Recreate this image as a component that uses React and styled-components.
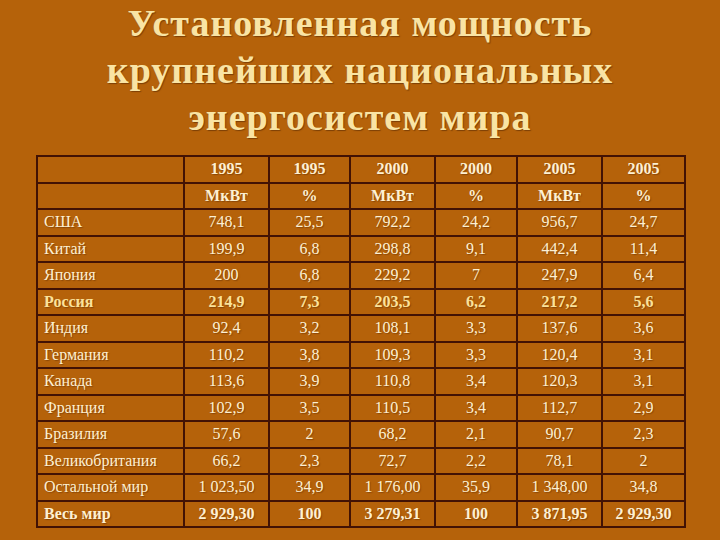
import React from "react";
import styled, { createGlobalStyle } from "styled-components";

const GlobalStyle = createGlobalStyle`
  html, body {
    margin: 0;
    padding: 0;
    background: #b5620a;
  }
`;

const cols = [147, 85, 81, 85, 82, 85, 83];

const header = [
  ["", "1995", "1995", "2000", "2000", "2005", "2005"],
  ["", "МкВт", "%", "МкВт", "%", "МкВт", "%"],
];

const rows = [
  { name: "США", values: ["748,1", "25,5", "792,2", "24,2", "956,7", "24,7"] },
  { name: "Китай", values: ["199,9", "6,8", "298,8", "9,1", "442,4", "11,4"] },
  { name: "Япония", values: ["200", "6,8", "229,2", "7", "247,9", "6,4"] },
  { name: "Россия", values: ["214,9", "7,3", "203,5", "6,2", "217,2", "5,6"], accent: true },
  { name: "Индия", values: ["92,4", "3,2", "108,1", "3,3", "137,6", "3,6"] },
  { name: "Германия", values: ["110,2", "3,8", "109,3", "3,3", "120,4", "3,1"] },
  { name: "Канада", values: ["113,6", "3,9", "110,8", "3,4", "120,3", "3,1"] },
  { name: "Франция", values: ["102,9", "3,5", "110,5", "3,4", "112,7", "2,9"] },
  { name: "Бразилия", values: ["57,6", "2", "68,2", "2,1", "90,7", "2,3"] },
  { name: "Великобритания", values: ["66,2", "2,3", "72,7", "2,2", "78,1", "2"] },
  { name: "Остальной мир", values: ["1 023,50", "34,9", "1 176,00", "35,9", "1 348,00", "34,8"] },
  { name: "Весь мир", values: ["2 929,30", "100", "3 279,31", "100", "3 871,95", "2 929,30"], total: true },
];

const Page = styled.div`
  width: 720px;
  height: 540px;
  display: flex;
  flex-direction: column;
  align-items: center;
  background: #b5620a;
  overflow: hidden;
`;

const Title = styled.h1`
  margin: 0;
  font-family: "Liberation Serif", "Times New Roman", serif;
  font-weight: 700;
  font-size: 38px;
  letter-spacing: 1px;
  line-height: 47px;
  color: #f9e4a4;
  text-align: center;
  text-shadow: 1px 1px 1px rgba(70, 30, 0, 0.5);
`;

const Line = styled.span`
  display: block;
`;

const Table = styled.table`
  margin-top: 14px;
  align-self: flex-start;
  margin-left: 36px;
  border-collapse: collapse;
  table-layout: fixed;
  width: 648px;
  font-family: "Liberation Serif", "Times New Roman", serif;
  font-size: 16px;
  color: #fdf0d2;
`;

const Row = styled.tr`
  height: 26.5px;
  font-weight: ${(p) => (p.$bold ? 700 : 400)};
  color: ${(p) => (p.$accent ? "#fbe29a" : "inherit")};
`;

const Cell = styled.td`
  border: 2px solid #421204;
  padding: 0 0 0 ${(p) => (p.$name ? 6 : 0)}px;
  text-align: ${(p) => (p.$name ? "left" : "center")};
  vertical-align: middle;
  line-height: 1;
  white-space: nowrap;
  text-shadow: 1px 1px 1px rgba(60, 20, 0, 0.35);
`;

export default function App() {
  return (
    <>
      <GlobalStyle />
      <Page>
        <Title>
          <Line>Установленная мощность</Line>
          <Line>крупнейших национальных</Line>
          <Line>энергосистем мира</Line>
        </Title>
        <Table>
          <colgroup>
            {cols.map((w, i) => (
              <col key={i} style={{ width: w }} />
            ))}
          </colgroup>
          <tbody>
            {header.map((h, i) => (
              <Row key={"h" + i} $bold>
                {h.map((c, j) => (
                  <Cell key={j}>{c}</Cell>
                ))}
              </Row>
            ))}
            {rows.map((r) => (
              <Row key={r.name} $bold={r.accent || r.total} $accent={r.accent}>
                <Cell $name>{r.name}</Cell>
                {r.values.map((v, j) => (
                  <Cell key={j}>{v}</Cell>
                ))}
              </Row>
            ))}
          </tbody>
        </Table>
      </Page>
    </>
  );
}
